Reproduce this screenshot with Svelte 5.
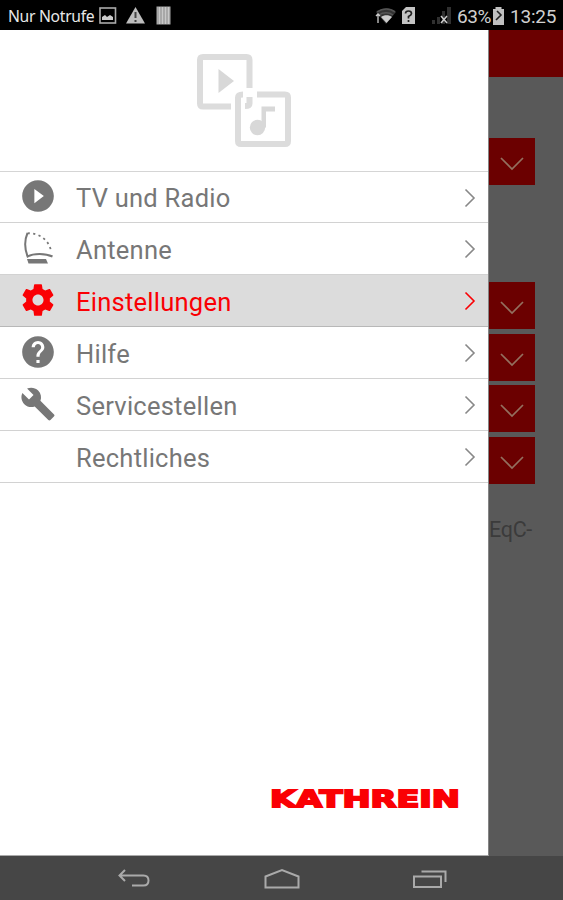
<script lang="ts">
  let active = 'Einstellungen';

  const items = [
    { label: 'TV und Radio', icon: 'play' },
    { label: 'Antenne', icon: 'dish' },
    { label: 'Einstellungen', icon: 'gear' },
    { label: 'Hilfe', icon: 'help' },
    { label: 'Servicestellen', icon: 'wrench' },
    { label: 'Rechtliches', icon: '' }
  ];

  const dropdowns = [1, 2, 3, 4];
</script>

<div class="screen">
  <header class="status">
    <span class="carrier">Nur Notrufe</span>
    <svg class="left-icons" width="76" height="30" viewBox="0 0 76 30">
      <rect x="2" y="8" width="15.5" height="15" fill="none" stroke="#aaa" stroke-width="1.6" />
      <path d="M4 20v-3l3-2 2 2 3-2 3 2v3z" fill="#ccc" />
      <path d="M37.500 7 47 23.500H28z" fill="#bdbdbd" />
      <path d="M37.500 12v6M37.500 20v2" stroke="#444" stroke-width="2" />
      <rect x="58.500" y="6.500" width="14" height="18" fill="#a8a8a8" />
      <path d="M61.500 7v17M64.500 7v17M67.500 7v17M70.500 7v17" stroke="#c8c8c8" />
    </svg>
    <svg class="right-icons" width="80" height="30" viewBox="0 0 80 30">
      <path d="M2 12c6-5 14-5 20 0L12 24z" fill="#333" />
      <path d="M3 12c6-4 13-4 18 0M5 15c4-3 10-3 14 0" fill="none" stroke="#555" stroke-width="1.500" />
      <path d="M7 17c3-2.500 8-2.500 11 0l-5.500 6z" fill="#ccc" />
      <path d="M4 14v9M2 16l2-2 2 2" fill="none" stroke="#ccc" stroke-width="1.300" />
      <path d="M32 7h9v17H28V11z" fill="#c4c4c4" />
      <path d="M31.500 13.500q0-2.500 3-2.500t3 2.500q0 1.500-3 3v2M34.500 20v2" fill="none" stroke="#222" stroke-width="1.700" />
      <path d="M58 24v-4h3v4zM63 24v-7h3v7zM68 24V11h3v13zM73 24V7h4v17z" fill="#303030" />
      <path d="m67 16 6 7m0-7-6 7" stroke="#ccc" stroke-width="1.500" />
    </svg>
    <span class="percent">63%</span>
    <svg class="battery" width="13" height="18" viewBox="0 0 13 18">
      <path d="M3.500 0h6v2H12v16H1V2h2.500z" fill="#c0c0c0" />
      <path d="m5 4 4 4-5 5" fill="none" stroke="#222" stroke-width="1.600" />
    </svg>
    <span class="clock">13:25</span>
  </header>

  <main>
    <nav class="drawer">
      <div class="brand">
        <svg width="96" height="96" viewBox="0 0 96 96">
          <g fill="none" stroke="#dcdcdc" stroke-width="6">
            <path d="M35 53.500H7Q4 53.500 4 50.500V7Q4 4 7 4h43.500q3 0 3 3v28M53.500 44v6.500q0 2.500-4.500 2.500" />
            <path d="M61 41.500h28q3 0 3 3V88q0 3-3 3H45q-3 0-3-3V44.500q0-3 5-3" />
          </g>
          <path d="M22.500 16v24L38 28z" fill="#d8d8d8" />
          <circle cx="61.500" cy="74.500" r="7.700" fill="#d8d8d8" />
          <path d="M65.500 53.500H79v5h-9v16h-4.500z" fill="#d8d8d8" />
        </svg>
      </div>

      <ul>
        {#each items as item}
          <li class:active={item.label === active}>
            <button on:click={() => (active = item.label)}>
              <span class="icon">
                {#if item.icon === 'play'}
                  <svg width="38" height="38" viewBox="0 0 24 24" fill="currentColor">
                    <path d="M12 2C6.480 2 2 6.480 2 12s4.480 10 10 10 10-4.480 10-10S17.520 2 12 2zm-2.300 14.500v-9l6 4.500z" />
                  </svg>
                {:else if item.icon === 'dish'}
                  <svg width="38" height="38" viewBox="0 0 38 38" fill="none" stroke="currentColor" stroke-width="2">
                    <path d="M8.500 4C5.500 11 5.500 20 9 28.500M8.500 27.500c6-3.500 18-3.500 25 0" />
                    <path d="M8.500 4.300C20 3.500 30 11 32 22" stroke-width="1.800" stroke-dasharray="2.200 3.400" />
                    <path d="M8 30h19l2 4.500H9.500z" fill="currentColor" stroke="none" />
                  </svg>
                {:else if item.icon === 'gear'}
                  <svg width="38" height="38" viewBox="0 0 24 24" fill="currentColor">
                    <path d="M19.430 12.980c.04-.32.070-.64.070-.98s-.03-.66-.07-.98l2.110-1.650c.19-.15.240-.42.120-.64l-2-3.460c-.12-.22-.39-.3-.61-.22l-2.490 1c-.52-.4-1.080-.73-1.690-.98l-.38-2.650C14.460 2.180 14.250 2 14 2h-4c-.25 0-.46.180-.49.420l-.38 2.650c-.61.250-1.170.59-1.690.98l-2.490-1c-.23-.09-.49 0-.61.220l-2 3.460c-.13.220-.07.49.120.64l2.110 1.650c-.04.320-.07.650-.07.980s.03.660.070.980l-2.110 1.650c-.19.150-.24.420-.12.640l2 3.460c.12.220.39.300.61.220l2.490-1c.52.400 1.080.730 1.690.980l.38 2.650c.03.240.24.420.49.420h4c.25 0 .46-.18.490-.42l.38-2.650c.61-.25 1.170-.59 1.690-.98l2.490 1c.23.090.49 0 .61-.22l2-3.460c.12-.22.070-.49-.12-.64zM12 15.500c-1.930 0-3.500-1.570-3.500-3.500s1.570-3.500 3.500-3.500 3.500 1.570 3.500 3.500-1.570 3.500-3.500 3.500z" />
                  </svg>
                {:else if item.icon === 'help'}
                  <svg width="38" height="38" viewBox="0 0 24 24" fill="currentColor">
                    <path d="M12 2C6.480 2 2 6.480 2 12s4.480 10 10 10 10-4.480 10-10S17.520 2 12 2zm1 17h-2v-2h2v2zm2.070-7.750-.9.920C13.450 12.900 13 13.500 13 15h-2v-.5c0-1.100.45-2.100 1.170-2.830l1.240-1.260c.37-.36.590-.86.590-1.410 0-1.100-.9-2-2-2s-2 .9-2 2H8c0-2.210 1.790-4 4-4s4 1.790 4 4c0 .88-.36 1.680-.93 2.250z" />
                  </svg>
                {:else if item.icon === 'wrench'}
                  <svg width="36" height="36" viewBox="0 0 24 24" fill="currentColor">
                    <path d="m22.700 19-9.100-9.100c.9-2.300.4-5-1.500-6.900-2-2-5-2.400-7.400-1.300L9 6 6 9 1.600 4.700C.4 7.100.9 10.100 2.900 12.100c1.900 1.900 4.600 2.400 6.900 1.500l9.100 9.100c.4.4 1 .4 1.400 0l2.300-2.300c.5-.4.5-1.100.1-1.400z" />
                  </svg>
                {/if}
              </span>
              <span class="label">{item.label}</span>
              <svg class="arrow" width="12" height="20" viewBox="0 0 12 20">
                <path d="m1.500 1.500 8.500 8.500-8.500 8.500" fill="none" stroke="currentColor" stroke-width="1.600" />
              </svg>
            </button>
          </li>
        {/each}
      </ul>

      <svg class="logo" width="196" height="32" viewBox="0 0 196 32">
        <text x="2" y="24.500" textLength="190" lengthAdjust="spacingAndGlyphs">KATHREIN</text>
      </svg>
    </nav>

    <section class="content">
      <div class="titlebar"></div>
      <div class="select first">
        <svg width="24" height="14" viewBox="0 0 24 14"><path d="m1 1 11 11L23 1" /></svg>
      </div>
      <div class="group">
        {#each dropdowns as _}
          <div class="select">
            <svg width="24" height="14" viewBox="0 0 24 14"><path d="m1 1 11 11L23 1" /></svg>
          </div>
        {/each}
      </div>
      <p>EqC-</p>
    </section>
  </main>

  <footer>
    <svg width="34" height="22" viewBox="0 0 34 22">
      <path d="M8 2 2.500 7.500 8 13M3 7.500h23.500q5 0 5 5t-5 5H15" />
    </svg>
    <svg width="36" height="22" viewBox="0 0 36 22">
      <path d="M1.500 19.500V8.500L18 2l16.500 6.500v11z" />
    </svg>
    <svg width="36" height="22" viewBox="0 0 36 22">
      <path d="M2 8.500h27v10.500H2zM9.500 3.500h24V14" />
    </svg>
  </footer>
</div>

<style>
  :global(body) {
    margin: 0;
  }

  .screen {
    display: flex;
    flex-direction: column;
    width: 563px;
    height: 900px;
    overflow: hidden;
    background: #595959;
    font-family: Roboto, sans-serif;
  }

  .status {
    display: flex;
    align-items: center;
    height: 30px;
    flex: none;
    box-sizing: border-box;
    padding: 0 7px 0 8px;
    background: #000;
    color: #d0d0d0;
    white-space: nowrap;
  }

  .carrier {
    width: 90px;
    padding-top: 2px;
    font-family: "Noto Sans", sans-serif;
    font-size: 15.700px;
    letter-spacing: -0.3px;
    color: #e8e8e8;
  }

  .right-icons {
    margin-left: auto;
  }

  .percent,
  .clock {
    padding-top: 3px;
    font-size: 19px;
  }

  .percent {
    width: 35px;
    margin-left: 3px;
    letter-spacing: -0.4px;
  }

  .battery {
    margin: 1px 5px 0 0;
  }

  .clock {
    width: 46px;
    letter-spacing: -0.2px;
  }

  main {
    display: flex;
    flex: 1;
    min-height: 0;
  }

  .drawer {
    display: flex;
    flex-direction: column;
    flex: none;
    box-sizing: border-box;
    width: 489px;
    border-right: 1px solid #858585;
    border-bottom: 1px solid #aaa;
    background: #fff;
  }

  .brand {
    height: 142px;
    box-sizing: border-box;
    padding: 23px 0 0 196px;
    border-bottom: 1px solid #d5d5d5;
  }

  ul {
    margin: 0;
    padding: 0;
    list-style: none;
  }

  li {
    height: 52px;
    box-sizing: border-box;
    border-bottom: 1px solid #d2d2d2;
    color: #777;
  }

  li:first-child {
    height: 51px;
  }

  li.active {
    background: #dcdcdc;
    border-color: #b8b8b8;
    color: #fa0004;
  }

  button {
    display: flex;
    align-items: center;
    width: 100%;
    height: 100%;
    padding: 0 12px 0 19px;
    border: 0;
    background: none;
    color: inherit;
    font: inherit;
    text-align: left;
  }

  .icon {
    display: flex;
    justify-content: center;
    width: 38px;
    margin-right: 19px;
    padding-bottom: 2px;
  }

  .label {
    flex: 1;
    padding-top: 2px;
    font-size: 25.500px;
    line-height: 30px;
    letter-spacing: 0.25px;
  }

  .arrow {
    margin-top: 1px;
    color: #888;
  }

  .active .arrow {
    color: #fa0004;
  }

  .logo {
    display: block;
    margin: auto 24px 41px auto;
  }

  .logo text {
    font-family: "DejaVu Sans", sans-serif;
    font-size: 23px;
    font-weight: bold;
    fill: #fa0004;
    stroke: #fa0004;
    stroke-width: 1.800px;
  }

  .content {
    flex: 1;
  }

  .titlebar {
    height: 47px;
    background: #6b0000;
  }

  .select {
    display: flex;
    align-items: center;
    justify-content: center;
    box-sizing: border-box;
    width: 46px;
    height: 47px;
    padding-top: 5px;
    background: #6b0000;
  }

  .select path {
    fill: none;
    stroke: #94705f;
    stroke-width: 1.700;
  }

  .first {
    margin-top: 61px;
  }

  .group {
    display: grid;
    gap: 4.500px;
    margin-top: 97px;
  }

  p {
    margin: 33px 0 0;
    font-size: 21.500px;
    line-height: 26px;
    letter-spacing: -0.3px;
    color: #3b3b3b;
  }

  footer {
    display: flex;
    flex: none;
    justify-content: space-between;
    align-items: center;
    height: 44px;
    box-sizing: border-box;
    padding: 2px 115px 0 117px;
    background: #464646;
  }

  footer path {
    fill: none;
    stroke: #aaa;
    stroke-width: 2;
  }
</style>
